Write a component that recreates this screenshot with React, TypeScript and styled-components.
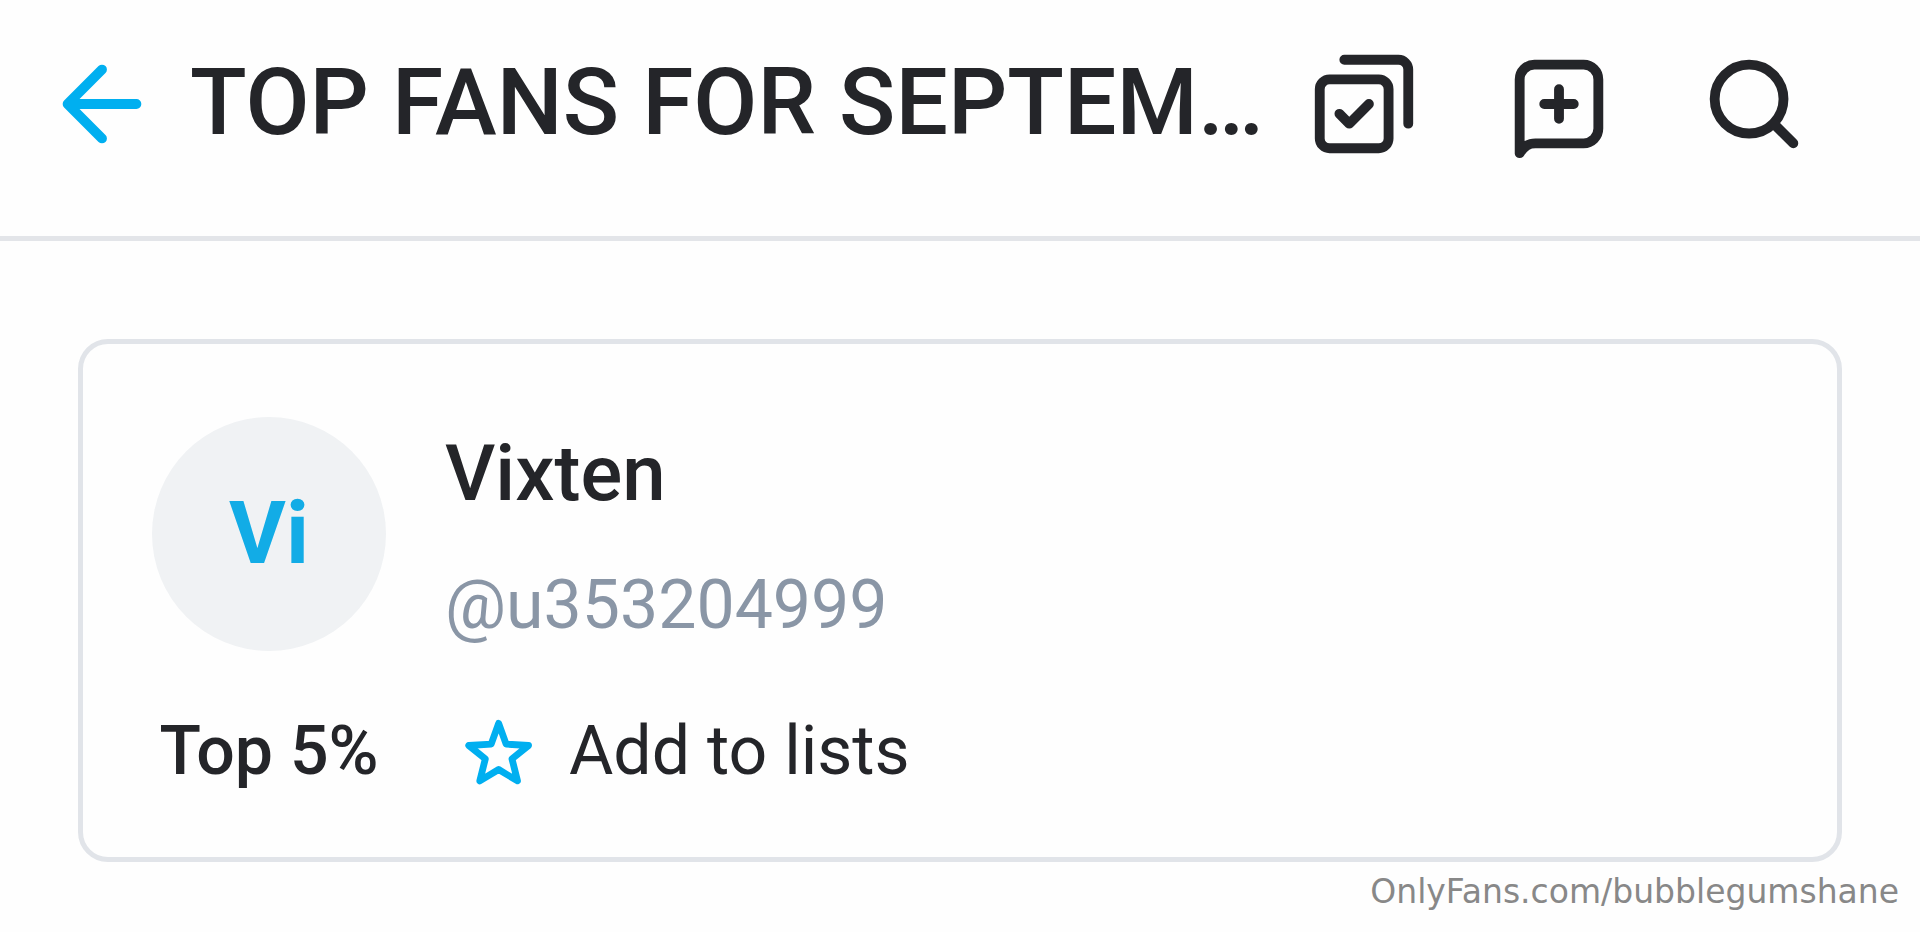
import React from "react";
import styled, { createGlobalStyle } from "styled-components";

const GlobalStyle = createGlobalStyle`
  *, *::before, *::after { box-sizing: border-box; }
  body {
    margin: 0;
    background: #fefefe;
    color: #242529;
    font-family: Roboto, "Liberation Sans", sans-serif;
  }
`;

const Header = styled.header`
  display: flex;
  align-items: flex-start;
  padding: 45px 107px 73px 43px;
  border-bottom: 5px solid #e3e5e9;
`;

const IconButton = styled.button<{ $accent?: boolean }>`
  flex: none;
  display: block;
  padding: 0;
  border: 0;
  background: none;
  cursor: pointer;
  color: ${(p) => (p.$accent ? "#00aff0" : "#242529")};
`;

const Icon = styled.svg<{ $size: number; $stroke?: number }>`
  display: block;
  flex: none;
  width: ${(p) => p.$size}px;
  height: ${(p) => p.$size}px;
  fill: none;
  stroke: currentColor;
  stroke-width: ${(p) => p.$stroke ?? 2};
  stroke-linecap: round;
  stroke-linejoin: round;
`;

const Title = styled.h1`
  flex: 1;
  min-width: 0;
  margin: 0 20px 0 29px;
  font-size: 93px;
  line-height: 116px;
  font-weight: 500;
  white-space: nowrap;
  overflow: hidden;
  text-overflow: ellipsis;
`;

const Actions = styled.div`
  flex: none;
  display: flex;
  gap: 77px;
`;

const Card = styled.article`
  display: grid;
  grid-template-columns: 234px 1fr;
  column-gap: 59px;
  row-gap: 54px;
  margin: 98px 78px 0;
  padding: 73px 69px 60px;
  border: 5px solid #e1e4e9;
  border-radius: 30px;
`;

const Avatar = styled.a`
  height: 234px;
  border-radius: 50%;
  background: #f0f2f4;
  color: #12ace6;
  font-size: 87px;
  line-height: 232px;
  font-weight: 700;
  text-align: center;
  text-decoration: none;
`;

const Identity = styled.div`
  display: flex;
  flex-direction: column;
  align-items: flex-start;
  justify-content: space-between;
`;

const Name = styled.a`
  color: inherit;
  font-size: 78px;
  line-height: 114px;
  font-weight: 500;
  text-decoration: none;
`;

const Handle = styled.a`
  color: #8a96a6;
  font-size: 68px;
  line-height: 92px;
  text-decoration: none;
`;

const Rank = styled.div`
  font-size: 68px;
  line-height: 92px;
  font-weight: 500;
  text-align: center;
  white-space: nowrap;
`;

const ListButton = styled.button`
  justify-self: start;
  display: flex;
  align-items: center;
  gap: 32px;
  padding: 0 0 0 14px;
  border: 0;
  background: none;
  color: #242529;
  font: inherit;
  font-size: 68px;
  line-height: 92px;
  cursor: pointer;

  svg { color: #00aff0; }
`;

const Footer = styled.footer`
  padding: 12px 21px 0;
  color: #888;
  font-family: "DejaVu Sans", sans-serif;
  font-size: 33px;
  line-height: 36px;
  text-align: right;
`;

export default function App() {
  return (
    <>
      <GlobalStyle />
      <Header>
        <IconButton $accent aria-label="Back">
          <Icon $size={118} viewBox="0 0 24 24">
            <path d="M19 12H5M12 5l-7 7 7 7" />
          </Icon>
        </IconButton>
        <Title>TOP FANS FOR SEPTEMBER</Title>
        <Actions>
          <IconButton aria-label="Select">
            <Icon $size={118} viewBox="0 0 24 24">
              <rect x="3" y="7" width="14" height="14" rx="2" />
              <path d="M8 3h11a2 2 0 0 1 2 2v11M7 14l2 2 4-4" />
            </Icon>
          </IconButton>
          <IconButton aria-label="New message">
            <Icon $size={118} viewBox="0 0 24 24">
              <path d="M4 22V7a3 3 0 0 1 3-3h10a3 3 0 0 1 3 3v10a3 3 0 0 1-3 3H7.200c-1.400 0-2.200.5-3.200 2M12 9v6M9 12h6" />
            </Icon>
          </IconButton>
          <IconButton aria-label="Search">
            <Icon $size={118} viewBox="0 0 24 24">
              <circle cx="11" cy="11" r="7" />
              <path d="M16 16l4 4" />
            </Icon>
          </IconButton>
        </Actions>
      </Header>
      <main>
        <Card>
          <Avatar href="#profile">Vi</Avatar>
          <Identity>
            <Name href="#profile">Vixten</Name>
            <Handle href="#profile">@u353204999</Handle>
          </Identity>
          <Rank>Top 5%</Rank>
          <ListButton>
            <Icon $size={78} $stroke={2.1} viewBox="0 0 24 24">
              <path d="M12.200 3.500l2.300 6.400 6.900.4-5.100 4.100 1.700 6.800-5.800-3.500-5.800 3.500 1.700-6.800-5.100-4.100 6.900-.4z" />
            </Icon>
            Add to lists
          </ListButton>
        </Card>
      </main>
      <Footer>OnlyFans.com/bubblegumshane</Footer>
    </>
  );
}
